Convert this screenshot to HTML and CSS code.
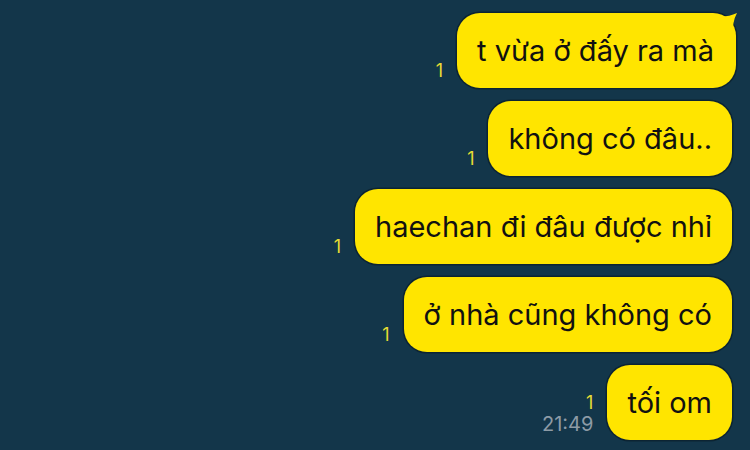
FILE: index.html
```html
<!DOCTYPE html>
<html lang="vi">
<head>
<meta charset="utf-8">
<link rel="stylesheet" href="styles.css">
</head>
<body>
<div class="chat">
  <div class="row first">
    <div class="meta"><span class="unread">1</span></div>
    <div class="bubble">t vừa ở đấy ra mà
      <svg class="tail" width="22" height="22" viewBox="0 0 22 22"><path d="M0 3 Q10 5 21 0 Q16 9 17 22 L0 22 Z" fill="#ffe500"/></svg>
    </div>
  </div>
  <div class="row">
    <div class="meta"><span class="unread">1</span></div>
    <div class="bubble">không có đâu..</div>
  </div>
  <div class="row">
    <div class="meta"><span class="unread">1</span></div>
    <div class="bubble">haechan đi đâu được nhỉ</div>
  </div>
  <div class="row">
    <div class="meta"><span class="unread">1</span></div>
    <div class="bubble">ở nhà cũng không có</div>
  </div>
  <div class="row">
    <div class="meta"><span class="unread">1</span><span class="time">21:49</span></div>
    <div class="bubble">tối om</div>
  </div>
</div>
</body>
</html>
```
FILE: styles.css
```css
html, body {
  margin: 0;
  padding: 0;
  background: #13364a;
}
body {
  width: 750px;
  height: 450px;
  overflow: hidden;
  font-family: "Inter", "Noto Sans", sans-serif;
}
.chat {
  display: flex;
  flex-direction: column;
  gap: 13px;
  padding: 13px 18px 0 0;
}
.row {
  display: flex;
  justify-content: flex-end;
  align-items: flex-end;
  gap: 14px;
}
.row.first {
  margin-right: -4px;
}
.row.first .bubble {
  padding-right: 22px;
}
.meta {
  display: flex;
  flex-direction: column;
  align-items: flex-end;
  padding-bottom: 6px;
  line-height: 22px;
}
.unread {
  color: #e6dc33;
  font-size: 18px;
}
.time {
  color: #8d9ba6;
  font-size: 20px;
  margin-top: -1px;
  margin-bottom: -1px;
}
.bubble {
  position: relative;
  height: 75px;
  box-sizing: border-box;
  padding: 0 20px;
  display: flex;
  align-items: center;
  background: #ffe500;
  border-radius: 23px;
  box-shadow: 0 0 0 1.5px #0c2433;
  color: #111;
  font-size: 29px;
  white-space: nowrap;
}
.tail {
  position: absolute;
  top: 0;
  right: -2px;
}
```
